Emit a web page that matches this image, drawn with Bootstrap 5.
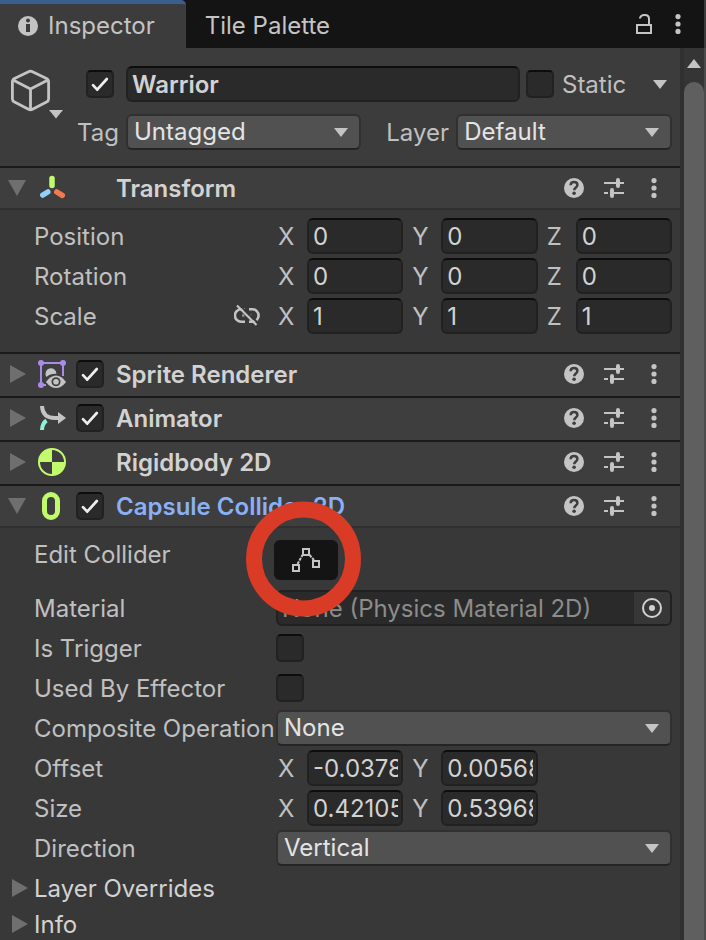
<!DOCTYPE html>
<html lang="en">
<head>
<meta charset="utf-8">
<meta name="viewport" content="width=device-width, initial-scale=1">
<title>Inspector</title>
<link href="https://cdn.jsdelivr.net/npm/bootstrap@5.3.0/dist/css/bootstrap.min.css" rel="stylesheet">
<style>
  body { font-family: Inter, "Liberation Sans", sans-serif; font-size: 24px; line-height: 36px; color: #c0c0c0; background: #383838; overflow: hidden; }
  svg { display: block; flex: none; }
  .plain-btn { background: none; border: 0; padding: 0; color: #c4c4c4; line-height: 0; }
  .tabbar { background: #141414; height: 48px; border-right: 2px solid #3c3c3c; }
  .tab { display: flex; align-items: center; height: 48px; border: 0; background: none; color: #c4c4c4; padding: 4px 19px 0; }
  .tab.current { background: #3c3c3c; border-top: 4px solid #3a5f8c; border-top-right-radius: 5px; padding: 0 31px 0 18px; gap: 10px; }
  .tab-tools { gap: 23px; padding-right: 23px; }
  .object-head { background: #3c3c3c; padding: 18px 8px 16px 0; }
  .object-icon { flex: none; width: 77px; padding: 3px 0 0 10px; }
  .object-fields { min-width: 0; }
  .tag-label, .layer-label, .static-box label, .axis-name { line-height: 34px; padding-top: 2px; }
  .tag-label { flex: none; width: 49px; }
  .active-slot { flex: none; width: 49px; padding-left: 9px; }
  .layer-label { flex: none; width: 95px; padding-left: 25px; }
  .tag-slot { flex: 12 1 0; }
  .layer-slot { flex: 11 1 0; }
  .static-box { flex: none; width: 152px; padding: 0 5px 0 6px; }
  .form-control.field { height: 36px; min-width: 0; padding: 0 3px 0 4px; font-size: 24px; line-height: 32px; color: #d2d2d2; background: #2a2a2a; border: 2px solid #212121; border-top-color: #0d0d0d; border-radius: 6px; }
  .form-select.drop { height: 36px; min-width: 0; padding: 0 36px 0 6px; font-size: 24px; line-height: 32px; color: #e4e4e4; border: 2px solid #303030; border-bottom-color: #242424; border-radius: 6px;
    background: #515151 url("data:image/svg+xml,%3Csvg xmlns='http://www.w3.org/2000/svg' viewBox='0 0 14 9'%3E%3Cpath fill='%23c4c4c4' d='M0 0h14L7 9z'/%3E%3C/svg%3E") no-repeat right 11px center / 14px 9px; }
  .form-check-input.tick { flex: none; width: 28px; height: 28px; margin: 0; background-color: #2a2a2a; border: 2px solid #212121; border-top-color: #0d0d0d; border-radius: 5px; }
  .form-check-input.tick:checked[type=checkbox] { background-color: #2a2a2a; border-color: #0d0d0d #212121 #212121;
    background-image: url("data:image/svg+xml,%3Csvg xmlns='http://www.w3.org/2000/svg' viewBox='0 0 24 24'%3E%3Cpath fill='none' stroke='%23eee' stroke-width='2.7' stroke-linecap='round' stroke-linejoin='round' d='M5 13.2l4.2 4.5L18.8 7'/%3E%3C/svg%3E"); background-size: 24px 24px; }
  .comp { border-top: 2px solid #1a1a1a; }
  .comp-head { height: 42px; background: #3e3e3e; border-bottom: 2px solid #3e3e3e; padding-right: 16px; }
  .comp-head.open { border-bottom-color: #303030; }
  .comp-head h2 { font-size: 24px; line-height: 36px; font-weight: 600; color: #d2d2d2; margin: 0; padding-top: 2px; }
  .comp-head.added h2 { color: #8ab0f5; }
  .fold { width: 34px; padding-left: 8px; color: #6f6f6f; }
  .comp-icon { width: 36px; padding-left: 4px; }
  .tick-slot { width: 46px; padding-left: 6px; }
  .tools { gap: 20px; }
  .tools .plain-btn { width: 20px; }
  .tools svg { margin: 0 auto; }
  .props { padding-top: 6px; }
  .prop { min-height: 40px; padding-right: 8px; }
  .prop-name { flex: none; width: 276px; padding: 2px 0 0 34px; white-space: nowrap; }
  .axes { gap: 7px; }
  .axis-name { flex: none; width: 31px; padding-left: 2px; }
  .edit-row { min-height: 54px; }
  .edit-row .prop-name { padding-top: 3px; }
  .edit-btn { width: 64px; height: 40px; margin: 6px 0 0 -2px; background: #141414; border: 0; border-radius: 6px; padding: 0; }
  .ring { left: -30px; top: -33px; pointer-events: none; z-index: 5; }
  .object-field { height: 36px; background: #2a2a2a; border: 2px solid #212121; border-radius: 6px; overflow: hidden; }
  .object-field input { background: none; border: 0; color: #8c8c8c; padding: 2px 4px 0; min-width: 0; line-height: 30px; }
  .object-field button { flex: none; width: 36px; background: #373737; }
  .subs { padding-top: 2px; }
  .sub { height: 36px; color: #d2d2d2; padding-left: 12px; }
  .sub span { line-height: 34px; padding-top: 2px; }
  .sub .fold-sub { width: 22px; color: #6f6f6f; }
  .scroll { width: 26px; background: #353535; border-left: 4px solid #303030; border-right: 2px solid #4c4c4c; }
  .scroll-up { padding: 10px 0 14px; }
  .thumb { background: #5f5f5f; border-radius: 10px 10px 0 0; }
</style>
</head>
<body>
<svg width="0" height="0" class="position-absolute" aria-hidden="true">
  <symbol id="down" viewBox="0 0 18 16"><path fill="currentColor" d="M0 0h18L9 16z"/></symbol>
  <symbol id="right" viewBox="0 0 16 18"><path fill="currentColor" d="M0 0v18l16-9z"/></symbol>
  <symbol id="help" viewBox="0 0 20 20"><circle cx="10" cy="10" r="10" fill="#c4c4c4"/><path d="M6.6 7.2C6.7 5 8.2 4 10 4c2 0 3.4 1.200 3.400 2.900 0 2.600-3.200 2.500-3.200 5.300" fill="none" stroke="#3e3e3e" stroke-width="2.500"/><circle cx="10.100" cy="15.300" r="1.800" fill="#3e3e3e"/></symbol>
  <symbol id="preset" viewBox="0 0 20 20"><path fill="none" stroke="#c4c4c4" stroke-width="2" d="M0 5h12M15 5h5M0 15h4M8 15h12"/><path stroke="#c4c4c4" stroke-width="4" stroke-linecap="round" d="M14 2v6M8 12v6"/></symbol>
  <symbol id="dots" viewBox="0 0 6 20"><g fill="#c4c4c4"><circle cx="3" cy="2.600" r="2.600"/><circle cx="3" cy="10" r="2.600"/><circle cx="3" cy="17.400" r="2.600"/></g></symbol>
</svg>

<div class="vh-100 d-flex flex-column">
  <header class="tabbar d-flex align-items-center">
    <button class="tab current" type="button">
      <svg width="20" height="20" viewBox="0 0 20 20"><circle cx="10" cy="10" r="10" fill="#c4c4c4"/><circle cx="10" cy="4.500" r="2" fill="#3c3c3c"/><path fill="#3c3c3c" d="M8 8h4v8H8z"/></svg>
      Inspector
    </button>
    <button class="tab" type="button">Tile Palette</button>
    <div class="tab-tools ms-auto d-flex align-items-center">
      <button class="plain-btn" type="button" aria-label="Lock"><svg width="16" height="20" viewBox="0 0 16 20"><path fill="none" stroke="#c4c4c4" stroke-width="2" d="M1 11h14v8H1zM4 4.500V4q1-3 4-3h1q4 0 4 4v6"/></svg></button>
      <button class="plain-btn" type="button" aria-label="Menu"><svg width="6" height="20"><use href="#dots"/></svg></button>
    </div>
  </header>

  <div class="d-flex flex-grow-1 overflow-hidden">
    <main class="flex-grow-1 overflow-hidden">
      <section class="object-head d-flex">
        <div class="object-icon">
          <svg width="54" height="50" viewBox="0 0 54 50"><path fill="none" stroke="#c4c4c4" stroke-width="2.800" stroke-linejoin="round" d="M18.500 2.700Q20.500 1.500 22.500 2.700L36.500 9.500Q38.600 10.500 38.600 13V30Q38.600 32 36.500 33L22.500 40.300Q20.500 41.400 18.500 40.300L4.500 33Q2.400 32 2.400 30V13Q2.400 10.500 4.500 9.500ZM3 11L20.500 20L38 11M20.500 20V40.500"/><path fill="#c4c4c4" d="M39 41h14l-7 8.500z"/></svg>
        </div>
        <div class="object-fields flex-grow-1 d-flex flex-column">
          <div class="d-flex align-items-center mb-2 pb-1">
            <div class="active-slot d-flex"><input class="form-check-input tick" type="checkbox" checked aria-label="Active"></div>
            <input class="form-control field flex-fill w-auto fw-semibold" type="text" value="Warrior" aria-label="Name">
            <div class="static-box d-flex align-items-center">
              <input class="form-check-input tick me-2" type="checkbox" id="static"><label for="static">Static</label>
              <button class="plain-btn ms-auto" type="button" aria-label="Static options"><svg width="14" height="9" viewBox="0 0 14 9"><path fill="#c4c4c4" d="M0 0h14L7 9z"/></svg></button>
            </div>
          </div>
          <div class="d-flex">
            <label class="tag-label" for="tag">Tag</label>
            <div class="tag-slot"><select class="form-select drop" id="tag"><option>Untagged</option></select></div>
            <label class="layer-label" for="layer">Layer</label>
            <div class="layer-slot"><select class="form-select drop" id="layer"><option>Default</option></select></div>
          </div>
        </div>
      </section>

      <section class="comp">
        <div class="comp-head open d-flex align-items-center">
          <button class="plain-btn fold" type="button" aria-label="Collapse"><svg width="18" height="16"><use href="#down"/></svg></button>
          <div class="comp-icon"><svg width="28" height="28" viewBox="0 0 28 28"><g fill="none" stroke-width="5.500" stroke-linecap="round"><path stroke="#c1fb6c" d="M14 4.500v7"/><path stroke="#8fd2fb" d="M9.800 18l-5 3"/><path stroke="#f27a4e" d="M18.800 18l5.500 3.300"/></g></svg></div>
          <div class="tick-slot"></div>
          <h2 class="flex-grow-1">Transform</h2>
          <div class="d-flex tools"><button class="plain-btn" type="button" aria-label="Help"><svg width="20" height="20"><use href="#help"/></svg></button><button class="plain-btn" type="button" aria-label="Presets"><svg width="20" height="20"><use href="#preset"/></svg></button><button class="plain-btn" type="button" aria-label="More"><svg width="6" height="20"><use href="#dots"/></svg></button></div>
        </div>
        <div class="props pb-3">
          <div class="prop d-flex align-items-center">
            <div class="prop-name">Position</div>
            <div class="d-flex flex-grow-1 axes">
              <div class="col d-flex"><label class="axis-name" for="px">X</label><input class="form-control field" id="px" value="0"></div>
              <div class="col d-flex"><label class="axis-name" for="py">Y</label><input class="form-control field" id="py" value="0"></div>
              <div class="col d-flex"><label class="axis-name" for="pz">Z</label><input class="form-control field" id="pz" value="0"></div>
            </div>
          </div>
          <div class="prop d-flex align-items-center">
            <div class="prop-name">Rotation</div>
            <div class="d-flex flex-grow-1 axes">
              <div class="col d-flex"><label class="axis-name" for="rx">X</label><input class="form-control field" id="rx" value="0"></div>
              <div class="col d-flex"><label class="axis-name" for="ry">Y</label><input class="form-control field" id="ry" value="0"></div>
              <div class="col d-flex"><label class="axis-name" for="rz">Z</label><input class="form-control field" id="rz" value="0"></div>
            </div>
          </div>
          <div class="prop d-flex align-items-center">
            <div class="prop-name d-flex justify-content-between align-items-center pe-3">Scale
              <button class="plain-btn" type="button" aria-label="Constrain proportions"><svg width="26" height="26" viewBox="0 0 26 26"><g fill="none" stroke="#c4c4c4" stroke-width="2.600"><path d="M11 5.200H7.200a5.500 5.500 0 0 0 0 12.600H11M15 5.200h3.300a5.500 5.500 0 0 1 0 12.600H15"/><path stroke="#8c8c8c" d="M8 11.500h2.500M15 11.500h2.500"/><path stroke="#383838" stroke-width="2" d="M5.500 1L24 19"/><path stroke-width="2.200" d="M3 1.500L22.500 21"/></g></svg></button>
            </div>
            <div class="d-flex flex-grow-1 axes">
              <div class="col d-flex"><label class="axis-name" for="sx">X</label><input class="form-control field" id="sx" value="1"></div>
              <div class="col d-flex"><label class="axis-name" for="sy">Y</label><input class="form-control field" id="sy" value="1"></div>
              <div class="col d-flex"><label class="axis-name" for="sz">Z</label><input class="form-control field" id="sz" value="1"></div>
            </div>
          </div>
        </div>
      </section>

      <section class="comp">
        <div class="comp-head d-flex align-items-center">
          <button class="plain-btn fold" type="button" aria-label="Expand"><svg width="20" height="18" viewBox="-2 0 20 18"><use href="#right" width="16" height="18"/></svg></button>
          <div class="comp-icon"><svg width="28" height="28" viewBox="0 0 28 28"><path fill="none" stroke="#a98bea" stroke-width="2" d="M8 25H3V3h22v13"/><g fill="#a98bea"><circle cx="3" cy="3" r="3"/><circle cx="25" cy="3" r="3"/><circle cx="3" cy="25" r="3"/></g><path fill="#c4c4c4" d="M8.500 17a5.500 5.500 0 1 1 10-3.300Q12 13.500 8.500 17z"/><path fill="#c4c4c4" d="M8 22q4.500-6.500 10-6.500T28 22q-4.500 6-10 6T8 22z"/><circle cx="18" cy="21.700" r="4.500" fill="#3e3e3e"/><circle cx="18" cy="21.700" r="2.800" fill="#c4c4c4"/></svg></div>
          <div class="tick-slot d-flex"><input class="form-check-input tick" type="checkbox" checked aria-label="Enable Sprite Renderer"></div>
          <h2 class="flex-grow-1">Sprite Renderer</h2>
          <div class="d-flex tools"><button class="plain-btn" type="button" aria-label="Help"><svg width="20" height="20"><use href="#help"/></svg></button><button class="plain-btn" type="button" aria-label="Presets"><svg width="20" height="20"><use href="#preset"/></svg></button><button class="plain-btn" type="button" aria-label="More"><svg width="6" height="20"><use href="#dots"/></svg></button></div>
        </div>
      </section>

      <section class="comp">
        <div class="comp-head d-flex align-items-center">
          <button class="plain-btn fold" type="button" aria-label="Expand"><svg width="20" height="18" viewBox="-2 0 20 18"><use href="#right" width="16" height="18"/></svg></button>
          <div class="comp-icon"><svg width="28" height="28" viewBox="0 0 28 28"><path fill="none" stroke="#8ff0dc" stroke-width="4" d="M4 26q.2-6.500 4.500-9.500"/><path fill="none" stroke="#c4c4c4" stroke-width="4" d="M4 2q.5 12 13 12h4"/><path fill="#c4c4c4" d="M20 8l8 6-8 6z"/></svg></div>
          <div class="tick-slot d-flex"><input class="form-check-input tick" type="checkbox" checked aria-label="Enable Animator"></div>
          <h2 class="flex-grow-1">Animator</h2>
          <div class="d-flex tools"><button class="plain-btn" type="button" aria-label="Help"><svg width="20" height="20"><use href="#help"/></svg></button><button class="plain-btn" type="button" aria-label="Presets"><svg width="20" height="20"><use href="#preset"/></svg></button><button class="plain-btn" type="button" aria-label="More"><svg width="6" height="20"><use href="#dots"/></svg></button></div>
        </div>
      </section>

      <section class="comp">
        <div class="comp-head d-flex align-items-center">
          <button class="plain-btn fold" type="button" aria-label="Expand"><svg width="20" height="18" viewBox="-2 0 20 18"><use href="#right" width="16" height="18"/></svg></button>
          <div class="comp-icon"><svg width="28" height="28" viewBox="0 0 28 28"><circle cx="14" cy="14" r="13" fill="none" stroke="#c1fb6c" stroke-width="2"/><path fill="#c1fb6c" d="M14 14V1A13 13 0 0 0 1 14zM14 14v13a13 13 0 0 0 13-13z"/></svg></div>
          <div class="tick-slot"></div>
          <h2 class="flex-grow-1">Rigidbody 2D</h2>
          <div class="d-flex tools"><button class="plain-btn" type="button" aria-label="Help"><svg width="20" height="20"><use href="#help"/></svg></button><button class="plain-btn" type="button" aria-label="Presets"><svg width="20" height="20"><use href="#preset"/></svg></button><button class="plain-btn" type="button" aria-label="More"><svg width="6" height="20"><use href="#dots"/></svg></button></div>
        </div>
      </section>

      <section class="comp">
        <div class="comp-head open added d-flex align-items-center">
          <button class="plain-btn fold" type="button" aria-label="Collapse"><svg width="18" height="16"><use href="#down"/></svg></button>
          <div class="comp-icon"><svg width="28" height="28" viewBox="0 0 28 28"><rect x="6.500" y="2.500" width="13" height="23" rx="6.500" fill="none" stroke="#c1fb6c" stroke-width="5"/></svg></div>
          <div class="tick-slot d-flex"><input class="form-check-input tick" type="checkbox" checked aria-label="Enable Capsule Collider 2D"></div>
          <h2 class="flex-grow-1">Capsule Collider 2D</h2>
          <div class="d-flex tools"><button class="plain-btn" type="button" aria-label="Help"><svg width="20" height="20"><use href="#help"/></svg></button><button class="plain-btn" type="button" aria-label="Presets"><svg width="20" height="20"><use href="#preset"/></svg></button><button class="plain-btn" type="button" aria-label="More"><svg width="6" height="20"><use href="#dots"/></svg></button></div>
        </div>
        <div class="props">
          <div class="prop edit-row d-flex">
            <div class="prop-name">Edit Collider</div>
            <div class="position-relative">
              <button class="edit-btn d-flex align-items-center justify-content-center" type="button" aria-label="Edit Collider"><svg width="28" height="24" viewBox="0 0 28 24"><g fill="none" stroke="#c4c4c4" stroke-width="2"><path stroke-dasharray="3 1" d="M5.500 16L10.500 7M17.500 7L22 12"/><path d="M1 17h6v6H1zM11 1h6v6h-6zM21 13h6v6h-6z"/></g></svg></button>
              <svg class="ring position-absolute" width="116" height="116" viewBox="0 0 116 116"><circle cx="57.500" cy="58" r="49.500" fill="none" stroke="#da3b26" stroke-width="16"/></svg>
            </div>
          </div>
          <div class="prop d-flex align-items-center">
            <label class="prop-name" for="mat">Material</label>
            <div class="object-field d-flex flex-grow-1">
              <input class="flex-grow-1" id="mat" value="None (Physics Material 2D)" readonly>
              <button class="plain-btn d-flex align-items-center justify-content-center" type="button" aria-label="Pick material"><svg width="20" height="20" viewBox="0 0 20 20"><circle cx="10" cy="10" r="9" fill="none" stroke="#d2d2d2" stroke-width="2"/><circle cx="10" cy="10" r="3" fill="#d2d2d2"/></svg></button>
            </div>
          </div>
          <div class="prop d-flex align-items-center"><label class="prop-name" for="trig">Is Trigger</label><input class="form-check-input tick" type="checkbox" id="trig"></div>
          <div class="prop d-flex align-items-center"><label class="prop-name" for="eff">Used By Effector</label><input class="form-check-input tick" type="checkbox" id="eff"></div>
          <div class="prop d-flex align-items-center"><label class="prop-name" for="comp-op">Composite Operation</label><select class="form-select drop" id="comp-op"><option>None</option></select></div>
          <div class="prop d-flex align-items-center">
            <div class="prop-name">Offset</div>
            <div class="d-flex flex-grow-1 axes">
              <div class="col d-flex"><label class="axis-name" for="ox">X</label><input class="form-control field" id="ox" value="-0.0378"></div>
              <div class="col d-flex"><label class="axis-name" for="oy">Y</label><input class="form-control field" id="oy" value="0.00568"></div>
              <div class="col"></div>
            </div>
          </div>
          <div class="prop d-flex align-items-center">
            <div class="prop-name">Size</div>
            <div class="d-flex flex-grow-1 axes">
              <div class="col d-flex"><label class="axis-name" for="zx">X</label><input class="form-control field" id="zx" value="0.42105"></div>
              <div class="col d-flex"><label class="axis-name" for="zy">Y</label><input class="form-control field" id="zy" value="0.53968"></div>
              <div class="col"></div>
            </div>
          </div>
          <div class="prop d-flex align-items-center"><label class="prop-name" for="dir">Direction</label><select class="form-select drop" id="dir"><option>Vertical</option></select></div>
          <div class="subs">
            <div class="sub d-flex align-items-center"><button class="plain-btn fold-sub" type="button" aria-label="Expand Layer Overrides"><svg width="16" height="18"><use href="#right"/></svg></button><span>Layer Overrides</span></div>
            <div class="sub d-flex align-items-center"><button class="plain-btn fold-sub" type="button" aria-label="Expand Info"><svg width="16" height="18"><use href="#right"/></svg></button><span>Info</span></div>
          </div>
        </div>
      </section>
    </main>

    <aside class="scroll flex-shrink-0 d-flex flex-column" aria-label="Scrollbar">
      <button class="plain-btn scroll-up d-flex justify-content-center" type="button" aria-label="Scroll up"><svg width="14" height="10" viewBox="0 0 14 10"><path fill="#c4c4c4" d="M0 10h14L7 1z"/></svg></button>
      <div class="thumb flex-grow-1"></div>
    </aside>
  </div>
</div>
<script src="https://cdn.jsdelivr.net/npm/bootstrap@5.3.0/dist/js/bootstrap.bundle.min.js"></script>
</body>
</html>
